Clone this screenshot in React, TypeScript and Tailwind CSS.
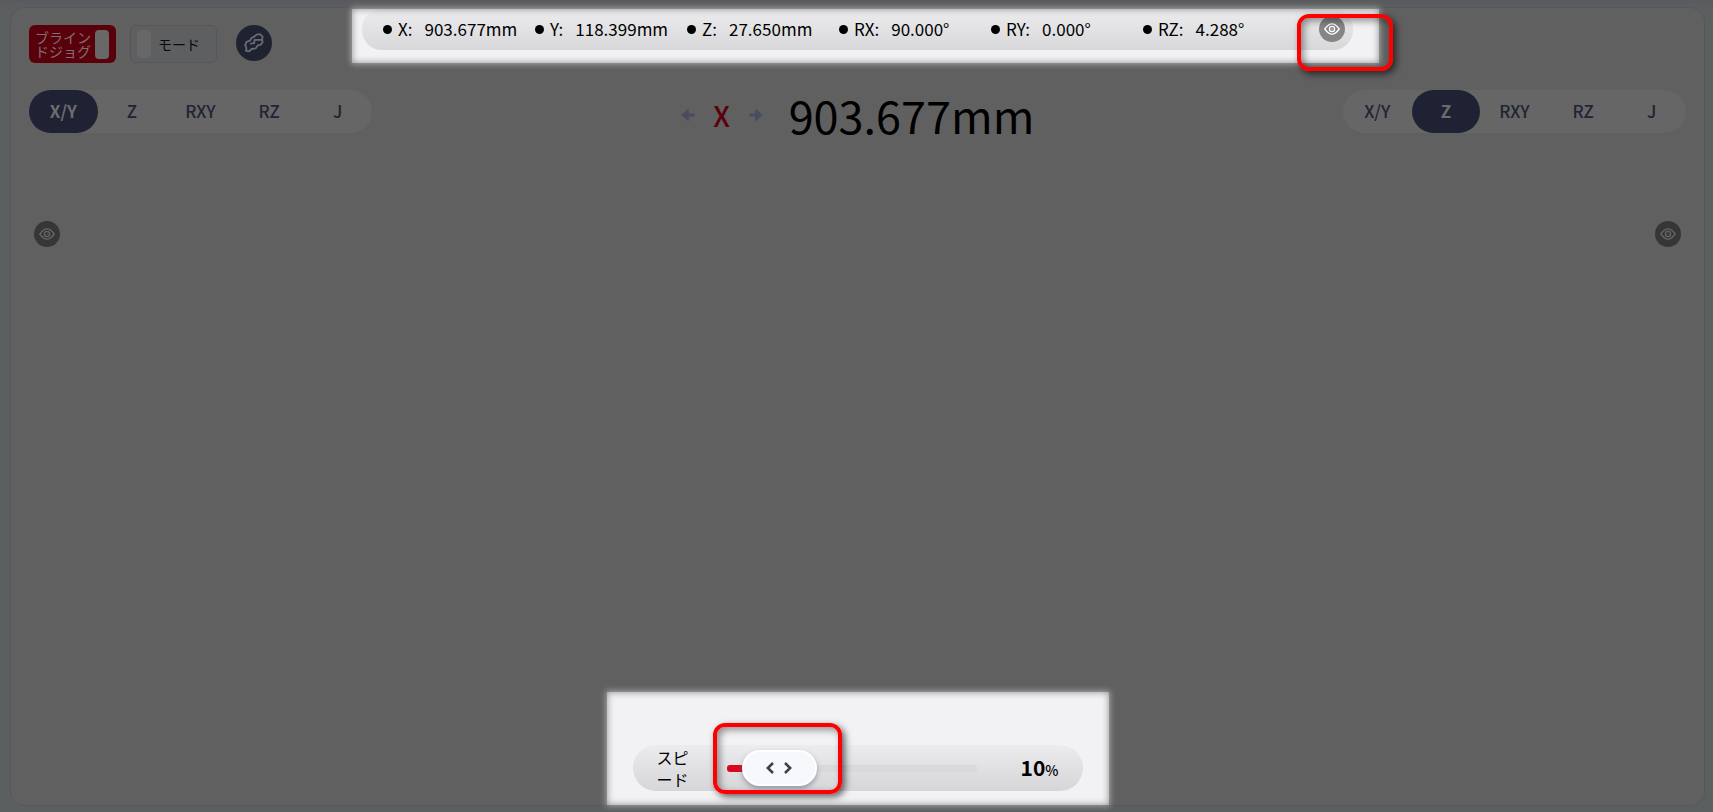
import { useState } from "react";

const AXES = [
  { name: "X", value: "903.677mm" },
  { name: "Y", value: "118.399mm" },
  { name: "Z", value: "27.650mm" },
  { name: "RX", value: "90.000°" },
  { name: "RY", value: "0.000°" },
  { name: "RZ", value: "4.288°" },
];

const MODES = ["X/Y", "Z", "RXY", "RZ", "J"];

function EyeIcon() {
  return (
    <svg viewBox="0 0 16 16" className="size-4" fill="none" stroke="currentColor" strokeWidth="1.3" aria-hidden="true">
      <path d="M0.8 8 Q4.6 2.8 8 2.8 T15.2 8 Q11.4 13.2 8 13.2 T0.8 8Z" strokeLinejoin="round" />
      <circle cx="8" cy="8" r="2.6" />
      <circle cx="8" cy="8" r="0.6" fill="currentColor" stroke="none" />
    </svg>
  );
}

function EyeButton({ lit = false, label }: { lit?: boolean; label: string }) {
  return (
    <button
      type="button"
      aria-label={label}
      className={
        lit
          ? "flex size-[26px] items-center justify-center rounded-full bg-[#858585] text-white"
          : "flex size-[26px] items-center justify-center rounded-full bg-[#363636] text-[#666666]"
      }
    >
      <EyeIcon />
    </button>
  );
}

function ArrowIcon({ flip = false }: { flip?: boolean }) {
  return (
    <svg viewBox="0 0 14 14" className={flip ? "h-[14px] w-[14px] rotate-180" : "h-[14px] w-[14px]"} fill="#484c5e" aria-hidden="true">
      <path d="M0.3 7 L7 1 Q7.8 0.6 7.8 1.6 V5.6 H12.6 Q13.8 5.8 13.8 7 T12.6 8.4 H7.8 V12.4 Q7.8 13.4 7 13Z" />
    </svg>
  );
}

function ModeTabs({ label, initial }: { label: string; initial: string }) {
  const [active, setActive] = useState(initial);
  return (
    <div role="group" aria-label={label} className="grid h-[43px] w-[343px] grid-cols-5 rounded-full bg-[#666666]">
      {MODES.map((m) => (
        <button
          key={m}
          type="button"
          aria-pressed={m === active}
          onClick={() => setActive(m)}
          className={
            m === active
              ? "rounded-full bg-[#1f2233] pb-[2px] text-[17px] leading-6 font-bold text-[#6c6c70]"
              : "rounded-full pb-[2px] text-[17px] leading-6 font-medium text-[#212433]"
          }
        >
          {m}
        </button>
      ))}
    </div>
  );
}

const SPOT =
  "relative bg-[#f2f2f5] shadow-[0_0_6px_1px_#a8a8a8] after:pointer-events-none after:absolute after:inset-0 after:shadow-[inset_0_0_7px_#8c8c8c]";
const RING =
  "pointer-events-none absolute z-10 rounded-[12px] border-4 border-[#fe0000] shadow-[3px_3px_7px_rgba(0,0,0,0.6),inset_3px_3px_7px_rgba(0,0,0,0.4)]";

export default function App() {
  const [blind, setBlind] = useState(true);
  const [mode, setMode] = useState(false);
  const [speed, setSpeed] = useState(10);

  return (
    <div className="flex min-h-screen flex-col bg-[#5c5f5f] bg-linear-to-b from-[#595a5e] to-[#5c5f5f] to-[10px] pt-[7px] pr-2 pb-[6px] pl-[10px] font-['Noto_Sans_CJK_JP','Open_Sans',sans-serif]">
      <main className="flex flex-1 flex-col rounded-[14px] border border-[#555859] bg-[#606060]">
        <header className="flex items-start pt-px">
          <div className="flex w-[341px] shrink-0 items-start pt-4 pl-[18px]">
            <button
              type="button"
              role="switch"
              aria-checked={blind}
              onClick={() => setBlind(!blind)}
              className="flex h-[38px] w-[87px] items-center justify-between rounded-md bg-[#5a000b] pr-[7px] pl-[6px]"
            >
              <span className="w-14 text-left text-[14px] leading-[14px] break-all text-[#7c7072]">ブラインドジョグ</span>
              <span className="h-[29px] w-[14px] rounded-sm bg-[#686868]" />
            </button>
            <button
              type="button"
              role="switch"
              aria-checked={mode}
              onClick={() => setMode(!mode)}
              className="ml-[14px] flex h-[38px] w-[87px] items-center rounded-md border border-[#53575c] bg-[#5d5f61] pl-[6px]"
            >
              <span className="h-[28px] w-[14px] rounded-sm bg-[#676767]" />
              <span className="ml-[7px] text-[14px] leading-5 text-[#090a0f]">モード</span>
            </button>
            <button
              type="button"
              aria-label="ロボット"
              className="ml-[19px] flex size-9 items-center justify-center rounded-full bg-[#1f2230] text-[#6a6b70]"
            >
              <svg viewBox="0 0 20 20" className="size-5" fill="none" stroke="currentColor" strokeWidth="1.8" strokeLinecap="round" strokeLinejoin="round" aria-hidden="true">
                <path d="M7.2 5.2 L10.6 3.4 L12.6 1.6 L16 1.2 L18.6 3.6 L18.2 6.8 L18.6 9.4 L16.4 11.8 L13.6 12.4 L11.8 15.4 L7.6 16 L5.2 18.4 L2 17.8 L2.4 15 L1.2 12.2 L2.6 8.8 L6 7.6 Z" />
                <path d="M17.8 6.8 L10.6 6.8 L10.2 10.2 L6.8 10.6" />
              </svg>
            </button>
          </div>

          <div className={`${SPOT} min-w-0 flex-1 pr-[26px] pb-[13px] pl-[10px]`}>
            <div className="flex h-[41px] items-start justify-between rounded-[20px] bg-linear-to-b from-[#ececee] to-[#d8d8da] pt-[7px] pr-2 pl-[21px]">
              <ul className="flex">
                {AXES.map((a) => (
                  <li key={a.name} className="flex h-[26px] w-[152px] items-center whitespace-nowrap text-black">
                    <span className="mr-[6px] size-[9px] shrink-0 rounded-full bg-black" />
                    <span className="text-[17px] leading-6">{a.name}:</span>
                    <span className="ml-3 text-[17px] leading-6">{a.value}</span>
                  </li>
                ))}
              </ul>
              <div className="relative">
                <EyeButton lit label="座標表示" />
                <div className={`${RING} top-[-2px] left-[-22px] h-[57px] w-[96px]`} />
              </div>
            </div>
          </div>

          <div className="w-[325px] shrink-0" />
        </header>

        <section className="mt-[27px] flex items-start justify-between pr-[18px] pl-[18px]">
          <ModeTabs label="左ジョグ" initial="X/Y" />
          <div className="flex h-[50px] items-center whitespace-nowrap">
            <ArrowIcon />
            <span className="w-[54px] text-center text-[28px] leading-8 font-medium text-[#5a000c]">X</span>
            <ArrowIcon flip />
            <span className="ml-[26px] text-[45px] leading-[50px] text-black">903.677mm</span>
          </div>
          <ModeTabs label="右ジョグ" initial="Z" />
        </section>

        <section className="mt-[81px] flex justify-between pr-[23px] pl-[23px]">
          <EyeButton label="左表示" />
          <EyeButton label="右表示" />
        </section>

        <footer className="mt-auto flex justify-center">
          <div className={`${SPOT} w-[502px] px-[26px] pt-[53px] pb-[14px]`}>
            <div className="flex h-[46px] items-center rounded-full bg-linear-to-b from-[#ececee] to-[#d6d6d8] pr-6 pl-6">
              <label htmlFor="speed" className="w-8 text-[16px] leading-[22px] text-black">
                スピード
              </label>
              <div className="relative ml-[38px] flex w-[250px] items-center">
                <input
                  id="speed"
                  type="range"
                  min={1}
                  max={100}
                  value={speed}
                  onChange={(e) => setSpeed(Number(e.target.value))}
                  className="h-[7px] w-full appearance-none rounded-[3px] bg-[#d9d9db] bg-linear-to-r from-[#d9081f] from-[30px] to-[#d9d9db] to-[30px] [&::-webkit-slider-thumb]:h-9 [&::-webkit-slider-thumb]:w-[75px] [&::-webkit-slider-thumb]:appearance-none [&::-webkit-slider-thumb]:rounded-full [&::-webkit-slider-thumb]:border-2 [&::-webkit-slider-thumb]:border-white [&::-webkit-slider-thumb]:bg-[#f6f8fb] [&::-webkit-slider-thumb]:shadow-[0_3px_5px_rgba(90,100,125,0.5)]"
                />
                <svg viewBox="0 0 26 12" className="pointer-events-none absolute left-[39px] h-3 w-[26px]" fill="none" stroke="#3b3f4e" strokeWidth="2.6" aria-hidden="true">
                  <path d="M7 1 L1.8 6 L7 11 M19 1 L24.2 6 L19 11" />
                </svg>
                <div className={`${RING} top-[-42px] left-[-14px] h-[71px] w-[129px]`} />
              </div>
              <div className="ml-auto flex items-baseline text-black">
                <span className="text-[21px] leading-7 font-bold">{speed}</span>
                <span className="text-[14px] leading-7 font-medium">%</span>
              </div>
            </div>
          </div>
        </footer>
      </main>
    </div>
  );
}
